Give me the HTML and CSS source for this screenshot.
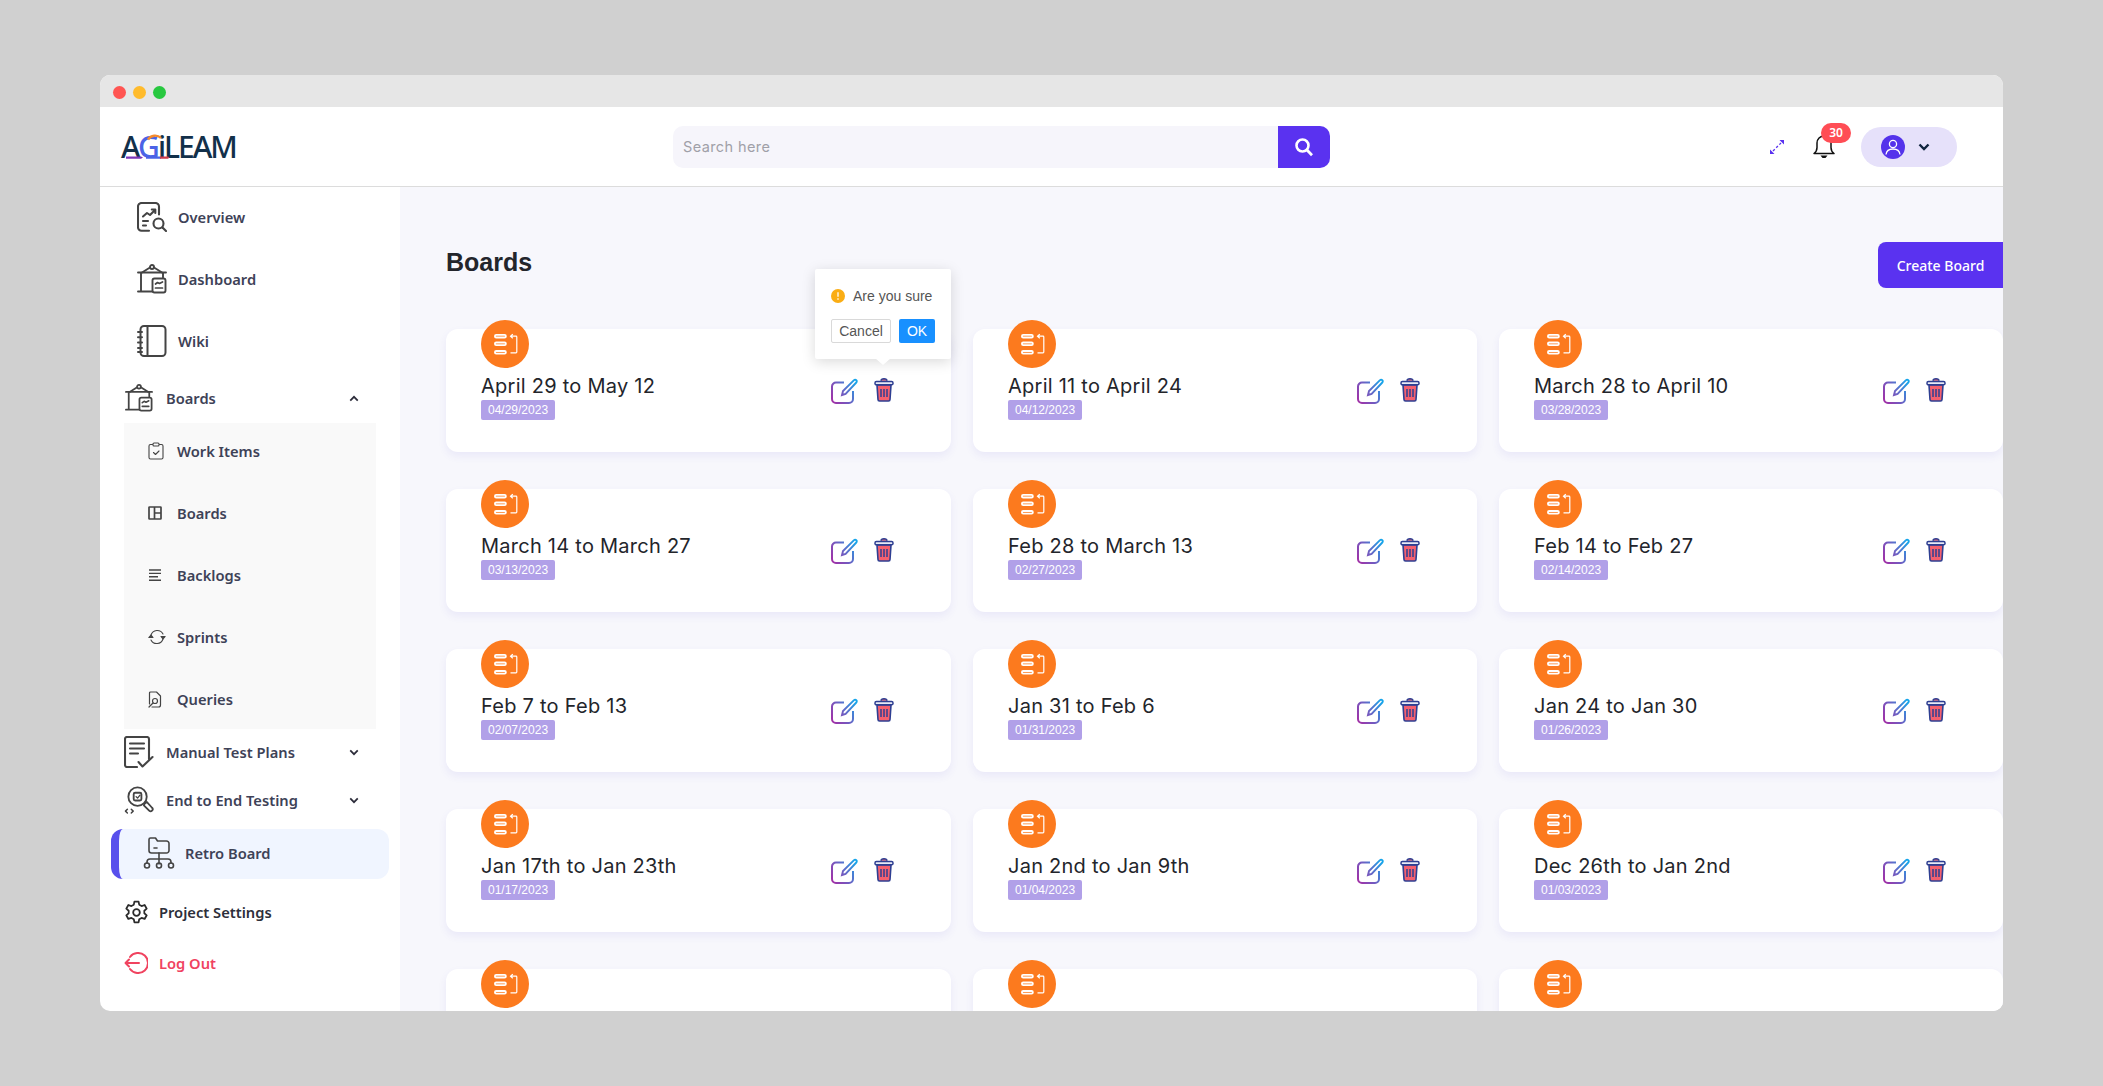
FILE: index.html
```html
<!DOCTYPE html>
<html lang="en">
<head>
  <meta charset="UTF-8" />
  <meta name="viewport" content="width=device-width, initial-scale=1.0"/>
  <title>Agileam Boards</title>
  <link rel="stylesheet" href="styles.css">
</head>
<body>
  <svg class="sprites" width="0" height="0">
    <defs>
      <linearGradient id="edit-grad" gradientUnits="userSpaceOnUse" x1="1" y1="22" x2="27" y2="6">
        <stop offset="0" stop-color="#a22fa6"/>
        <stop offset="0.5" stop-color="#6a62c4"/>
        <stop offset="1" stop-color="#16a5ea"/>
      </linearGradient>
      <symbol id="i-sprint" viewBox="0 0 48 48">
        <circle cx="24" cy="24" r="24" fill="#fc7a1e"/>
        <g fill="none" stroke="#fff" stroke-width="1.800">
          <rect x="13.900" y="14.900" width="11" height="2.600" rx="1.300"/>
          <rect x="13.900" y="22.500" width="11" height="2.600" rx="1.300"/>
          <rect x="13.900" y="31" width="11" height="2.600" rx="1.300"/>
        </g>
        <path d="M30 16.200h5a.8.8 0 0 1 .8.8v15a.8.8 0 0 1-.8.8H29.500M31.800 14.100l-2.300 2.100 2.300 2.100" fill="none" stroke="#fff" stroke-width="1.200"/>
      </symbol>
      <symbol id="i-edit" viewBox="0 0 28 26">
        <path d="M14 4.500H6a4 4 0 0 0-4 4V21a4 4 0 0 0 4 4h13a4 4 0 0 0 4-4v-8" fill="none" stroke="url(#edit-grad)" stroke-width="2"/>
        <path d="M12 17l1-4L24 2.200a1.600 1.600 0 0 1 2.300 0 1.600 1.600 0 0 1 0 2.300L15.600 15.800z" fill="none" stroke="url(#edit-grad)" stroke-width="1.900"/>
      </symbol>
      <symbol id="i-trash" viewBox="0 0 20 24">
        <path d="M3 7h14l-1 14.500a1.500 1.500 0 0 1-1.500 1.500h-9A1.500 1.500 0 0 1 4 21.500z" fill="#f4606f" stroke="#2e3f92" stroke-width="1.600"/>
        <path d="M7 2.800a3 2 0 0 1 6 0" fill="#c8506c" stroke="#2e3f92" stroke-width="1.400"/>
        <rect x="1" y="3.600" width="18" height="3.200" rx="1.400" fill="#e8eaf6" stroke="#2e3f92" stroke-width="1.500"/>
        <path d="M7 11v8M10 11v8M13 11v8" stroke="#2e3f92" stroke-width="1.500"/>
      </symbol>
      <symbol id="i-overview" viewBox="0 0 30 30">
        <g fill="none" stroke="#444" stroke-width="2.100" stroke-linecap="round" stroke-linejoin="round">
          <path d="M12 28.800H4.500a3.500 3.500 0 0 1-3.500-3.500V4.500A3.500 3.500 0 0 1 4.500 1h14A3.500 3.500 0 0 1 22 4.500v8"/>
          <path d="M6 14.500l4-3.500 3 2 5-5M14.800 7.500h3.500V11"/>
          <path d="M6 19h5M6 23.500h3"/>
          <circle cx="21.500" cy="21.500" r="5"/>
          <path d="M25.500 25.500l3.500 3.500"/>
        </g>
      </symbol>
      <symbol id="i-easel" viewBox="0 0 30 30">
        <g fill="none" stroke="#444" stroke-width="1.900" stroke-linecap="round" stroke-linejoin="round">
          <path d="M1 8.500h28M4 8.500v19M1 27.500h14M26 8.500v5"/>
          <path d="M5 8.500l8-5M25 8.500l-8-5"/>
          <circle cx="15" cy="3" r="2"/>
          <rect x="15.500" y="14.500" width="13" height="14" rx="2"/>
          <path d="M18.500 20l2-1.500 2 1 3-1.500M18.500 24h7" stroke-width="1.700"/>
        </g>
      </symbol>
      <symbol id="i-wiki" viewBox="0 0 30 32">
        <g fill="none" stroke="#444" stroke-width="2" stroke-linecap="round" stroke-linejoin="round">
          <rect x="3.500" y="1" width="25" height="30" rx="3.500"/>
          <path d="M10.500 1v30M1 7h4M1 12.300h4M1 17.600h4M1 23h4M1 27h4"/>
        </g>
      </symbol>
      <symbol id="i-clip" viewBox="0 0 16 18">
        <g fill="none" stroke="#444" stroke-width="1.100" stroke-linecap="round" stroke-linejoin="round">
          <path d="M4.500 2.500H2.500a1.500 1.500 0 0 0-1.500 1.500v11.500A1.500 1.500 0 0 0 2.500 17h11a1.500 1.500 0 0 0 1.500-1.500V4a1.500 1.500 0 0 0-1.500-1.500h-2"/>
          <rect x="5" y="1" width="6" height="3" rx="1"/>
          <path d="M5.500 10.500l2 2 3.500-3.500"/>
        </g>
      </symbol>
      <symbol id="i-layout" viewBox="0 0 14 14">
        <path d="M1.500 1h11a.5.5 0 0 1 .5.500v11a.5.5 0 0 1-.5.500h-11a.5.5 0 0 1-.5-.500v-11a.5.5 0 0 1 .5-.500zM6.500 1v12M6.500 7H13" fill="none" stroke="#444" stroke-width="1.700"/>
      </symbol>
      <symbol id="i-lines" viewBox="0 0 14 13">
        <path d="M1 1h12M1 4.400h12M1 7.800h9M1 11.200h12" stroke="#444" stroke-width="1.400"/>
      </symbol>
      <symbol id="i-sync" viewBox="0 0 18 18">
        <g fill="none" stroke="#444" stroke-width="1.100" stroke-linecap="round" stroke-linejoin="round">
          <path d="M3 7a6.500 6.500 0 0 1 12-1M15 11a6.500 6.500 0 0 1-12 1"/>
          <path d="M.8 9.500L3 7l2 2.500z" fill="#444"/>
          <path d="M17.200 8.500L15 11l-2-2.500z" fill="#444"/>
        </g>
      </symbol>
      <symbol id="i-query" viewBox="0 0 14 17">
        <g fill="none" stroke="#444" stroke-width="1.200" stroke-linecap="round" stroke-linejoin="round">
          <path d="M1.500 13V2a1 1 0 0 1 1-1h6l4 4v9a2 2 0 0 1-2 2H4"/>
          <circle cx="7" cy="10" r="2.500"/>
          <path d="M5 12l-4 4"/>
        </g>
      </symbol>
      <symbol id="i-plan" viewBox="0 0 30 32">
        <g fill="none" stroke="#444" stroke-width="2.100" stroke-linecap="round" stroke-linejoin="round">
          <path d="M13 31H3a2 2 0 0 1-2-2V3a2 2 0 0 1 2-2h20a2 2 0 0 1 2 2v20"/>
          <path d="M6 7.500h14M6 12.500h14M6 17.500h8"/>
          <path d="M14.500 26l4 4.500 10-9.500"/>
        </g>
      </symbol>
      <symbol id="i-e2e" viewBox="0 0 30 30">
        <g fill="none" stroke="#444" stroke-width="1.900" stroke-linecap="round" stroke-linejoin="round">
          <circle cx="13.500" cy="11" r="9.500"/>
          <rect x="9.500" y="7" width="8" height="8" rx="1.500"/>
          <path d="M12 11l1.500 1.500 2.500-3" stroke-width="1.400"/>
          <path d="M21 18l2-1.500 5.500 6a2 2 0 0 1-3 3L20 20z"/>
          <path d="M3 24l-2 2 2 2M7 24l2 2-2 2" stroke-width="1.500"/>
        </g>
      </symbol>
      <symbol id="i-retro" viewBox="0 0 32 32">
        <g fill="none" stroke="#444" stroke-width="1.600" stroke-linecap="round" stroke-linejoin="round">
          <path d="M6 2.500A1.500 1.500 0 0 1 7.500 1h5l2 3h9A2.500 2.500 0 0 1 26 6.500v7A2.500 2.500 0 0 1 23.500 16h-15A2.500 2.500 0 0 1 6 13.500z"/>
          <path d="M11 11h3"/>
          <path d="M16 16v11M4 26v-1a3 3 0 0 1 3-3h18a3 3 0 0 1 3 3v1"/>
          <circle cx="4" cy="28.500" r="2.500"/>
          <circle cx="16" cy="28.500" r="2.500"/>
          <circle cx="28" cy="28.500" r="2.500"/>
        </g>
      </symbol>
      <symbol id="i-gear" viewBox="0 0 24 24">
        <g fill="none" stroke="#2b2b2b" stroke-width="1.700" stroke-linecap="round" stroke-linejoin="round">
          <circle cx="12" cy="12" r="3.200"/>
          <path d="M10 1.500h4l.6 3 2.300 1.300 2.900-1 2 3.500-2.300 2v2.400l2.300 2-2 3.500-2.900-1-2.300 1.300-.6 3h-4l-.6-3-2.300-1.300-2.900 1-2-3.500 2.300-2v-2.400l-2.300-2 2-3.500 2.900 1 2.300-1.300z"/>
        </g>
      </symbol>
      <symbol id="i-logout" viewBox="0 0 24 22">
        <g fill="none" stroke="#f0435f" stroke-width="2" stroke-linecap="round" stroke-linejoin="round">
          <path d="M6 5a10 10 0 1 1 0 12"/>
          <path d="M1.500 11H15M5 7.500L1.500 11 5 14.500"/>
        </g>
      </symbol>
      <symbol id="i-down" viewBox="0 0 12 8">
        <path d="M1.500 1.500L6 6l4.500-4.500" fill="none" stroke="#2c2c3a" stroke-width="2.100"/>
      </symbol>
      <symbol id="i-up" viewBox="0 0 12 8">
        <path d="M1.500 6.500L6 2l4.500 4.500" fill="none" stroke="#2c2c3a" stroke-width="2.100"/>
      </symbol>
    </defs>
  </svg>

  <div class="window">
    <div class="titlebar">
      <span class="dot dot-red"></span>
      <span class="dot dot-yellow"></span>
      <span class="dot dot-green"></span>
    </div>

    <header class="topbar">
      <div class="brand">
        <div class="logo">A<span class="logo-g">G</span>iLEAM
          <svg class="logo-marks" width="116" height="26" viewBox="0 0 116 26">
            <path d="M27 5.500a8.500 8.500 0 0 1 13-1.500" fill="none" stroke="#f58a2c" stroke-width="2.400"/>
            <path d="M5 22.500h15l2 1.100-2 1.100H5z" fill="#7a35b8"/>
            <path d="M25 22.500h15v2.200H25z" fill="#4b63e6"/>
            <path d="M39 22.500h8l1.500 1.100-1.500 1.100h-8z" fill="#cf3d4e"/>
          </svg>
        </div>
      </div>
      <div class="search">
        <span class="search-input">Search here</span>
        <button class="search-btn">
          <svg width="20" height="20" viewBox="0 0 20 20"><circle cx="8.500" cy="8.500" r="6" fill="none" stroke="#fff" stroke-width="2.600"/><path d="M13 13l5 5.200" stroke="#fff" stroke-width="2.800"/></svg>
        </button>
      </div>
      <div class="tools">
        <svg class="expand" width="16" height="16" viewBox="0 0 16 16">
          <path d="M4 12L12 4" stroke="#5a32f0" stroke-width="1.300" stroke-dasharray="2.500 2"/>
          <path d="M1 15V10.500L5.500 15zM15 1v4.500L10.500 1z" fill="#5a32f0"/>
        </svg>
        <div class="bell">
          <svg width="22" height="25" viewBox="0 0 22 25">
            <path d="M1 19.500c2-1.500 3-3 3-6V9a7 7 0 0 1 14 0v4.500c0 3 1 4.500 3 6z" fill="none" stroke="#111" stroke-width="1.500" stroke-linejoin="round"/>
            <path d="M7.500 21.500h7l-2 2.500h-3z" fill="#111"/>
          </svg>
          <span class="badge">30</span>
        </div>
        <div class="user">
          <span class="avatar">
            <svg width="16" height="16" viewBox="0 0 16 16"><circle cx="8" cy="5" r="3.600" fill="none" stroke="#fff" stroke-width="1.300"/><path d="M1 15.500c.4-3.500 3-5.500 7-5.500s6.600 2 7 5.500" fill="none" stroke="#fff" stroke-width="1.300"/></svg>
          </span>
          <svg class="user-caret" width="12" height="8" viewBox="0 0 12 8"><path d="M1.500 1.500L6 6l4.500-4.500" fill="none" stroke="#10243e" stroke-width="2.400"/></svg>
        </div>
      </div>
    </header>

    <div class="body">
      <aside class="sidebar">
        <a class="nav-item"><svg class="nav-icon" width="30" height="30"><use href="#i-overview"/></svg>Overview</a>
        <a class="nav-item"><svg class="nav-icon" width="30" height="30"><use href="#i-easel"/></svg>Dashboard</a>
        <a class="nav-item"><svg class="nav-icon" width="30" height="32"><use href="#i-wiki"/></svg>Wiki</a>

        <a class="nav-group nav-group-open"><svg class="group-icon" width="28" height="28"><use href="#i-easel"/></svg>Boards<svg class="caret" width="10" height="7"><use href="#i-up"/></svg></a>
        <div class="subnav">
          <a class="sub-item"><span class="sub-icon"><svg width="16" height="18"><use href="#i-clip"/></svg></span>Work Items</a>
          <a class="sub-item"><span class="sub-icon"><svg width="14" height="14"><use href="#i-layout"/></svg></span>Boards</a>
          <a class="sub-item"><span class="sub-icon"><svg width="14" height="13"><use href="#i-lines"/></svg></span>Backlogs</a>
          <a class="sub-item"><span class="sub-icon"><svg width="18" height="18"><use href="#i-sync"/></svg></span>Sprints</a>
          <a class="sub-item"><span class="sub-icon"><svg width="14" height="17"><use href="#i-query"/></svg></span>Queries</a>
        </div>

        <a class="nav-group"><svg class="group-icon" width="30" height="32"><use href="#i-plan"/></svg>Manual Test Plans<svg class="caret" width="10" height="7"><use href="#i-down"/></svg></a>
        <a class="nav-group"><svg class="group-icon" width="29" height="29"><use href="#i-e2e"/></svg>End to End Testing<svg class="caret" width="10" height="7"><use href="#i-down"/></svg></a>

        <a class="nav-active"><svg class="active-icon" width="32" height="32"><use href="#i-retro"/></svg>Retro Board</a>

        <a class="nav-plain nav-settings"><svg width="25" height="25"><use href="#i-gear"/></svg>Project Settings</a>
        <a class="nav-plain nav-logout"><svg width="24" height="22"><use href="#i-logout"/></svg>Log Out</a>
      </aside>

      <main class="content">
        <div class="content-head">
          <h1>Boards</h1>
          <button class="create-btn">Create Board</button>
        </div>

        <section class="board-grid">
          <article class="card">
            <div class="card-info">
              <svg class="card-icon" width="48" height="48"><use href="#i-sprint"/></svg>
              <h3>April 29 to May 12</h3>
              <span class="date">04/29/2023</span>
            </div>
            <div class="actions">
              <svg width="28" height="26"><use href="#i-edit"/></svg>
              <svg width="20" height="24"><use href="#i-trash"/></svg>
            </div>
            <div class="popconfirm">
              <div class="pop-msg">
                <svg width="14" height="14" viewBox="0 0 14 14"><circle cx="7" cy="7" r="7" fill="#faad14"/><path d="M7 3.200v4.600M7 9.200v1.500" stroke="#fff" stroke-width="1.300"/></svg>
                Are you sure
              </div>
              <div class="pop-btns">
                <button class="btn-cancel">Cancel</button>
                <button class="btn-ok">OK</button>
              </div>
            </div>
          </article>

          <article class="card">
            <div class="card-info">
              <svg class="card-icon" width="48" height="48"><use href="#i-sprint"/></svg>
              <h3>April 11 to April 24</h3>
              <span class="date">04/12/2023</span>
            </div>
            <div class="actions">
              <svg width="28" height="26"><use href="#i-edit"/></svg>
              <svg width="20" height="24"><use href="#i-trash"/></svg>
            </div>
          </article>

          <article class="card">
            <div class="card-info">
              <svg class="card-icon" width="48" height="48"><use href="#i-sprint"/></svg>
              <h3>March 28 to April 10</h3>
              <span class="date">03/28/2023</span>
            </div>
            <div class="actions">
              <svg width="28" height="26"><use href="#i-edit"/></svg>
              <svg width="20" height="24"><use href="#i-trash"/></svg>
            </div>
          </article>

          <article class="card">
            <div class="card-info">
              <svg class="card-icon" width="48" height="48"><use href="#i-sprint"/></svg>
              <h3>March 14 to March 27</h3>
              <span class="date">03/13/2023</span>
            </div>
            <div class="actions">
              <svg width="28" height="26"><use href="#i-edit"/></svg>
              <svg width="20" height="24"><use href="#i-trash"/></svg>
            </div>
          </article>

          <article class="card">
            <div class="card-info">
              <svg class="card-icon" width="48" height="48"><use href="#i-sprint"/></svg>
              <h3>Feb 28 to March 13</h3>
              <span class="date">02/27/2023</span>
            </div>
            <div class="actions">
              <svg width="28" height="26"><use href="#i-edit"/></svg>
              <svg width="20" height="24"><use href="#i-trash"/></svg>
            </div>
          </article>

          <article class="card">
            <div class="card-info">
              <svg class="card-icon" width="48" height="48"><use href="#i-sprint"/></svg>
              <h3>Feb 14 to Feb 27</h3>
              <span class="date">02/14/2023</span>
            </div>
            <div class="actions">
              <svg width="28" height="26"><use href="#i-edit"/></svg>
              <svg width="20" height="24"><use href="#i-trash"/></svg>
            </div>
          </article>

          <article class="card">
            <div class="card-info">
              <svg class="card-icon" width="48" height="48"><use href="#i-sprint"/></svg>
              <h3>Feb 7 to Feb 13</h3>
              <span class="date">02/07/2023</span>
            </div>
            <div class="actions">
              <svg width="28" height="26"><use href="#i-edit"/></svg>
              <svg width="20" height="24"><use href="#i-trash"/></svg>
            </div>
          </article>

          <article class="card">
            <div class="card-info">
              <svg class="card-icon" width="48" height="48"><use href="#i-sprint"/></svg>
              <h3>Jan 31 to Feb 6</h3>
              <span class="date">01/31/2023</span>
            </div>
            <div class="actions">
              <svg width="28" height="26"><use href="#i-edit"/></svg>
              <svg width="20" height="24"><use href="#i-trash"/></svg>
            </div>
          </article>

          <article class="card">
            <div class="card-info">
              <svg class="card-icon" width="48" height="48"><use href="#i-sprint"/></svg>
              <h3>Jan 24 to Jan 30</h3>
              <span class="date">01/26/2023</span>
            </div>
            <div class="actions">
              <svg width="28" height="26"><use href="#i-edit"/></svg>
              <svg width="20" height="24"><use href="#i-trash"/></svg>
            </div>
          </article>

          <article class="card">
            <div class="card-info">
              <svg class="card-icon" width="48" height="48"><use href="#i-sprint"/></svg>
              <h3>Jan 17th to Jan 23th</h3>
              <span class="date">01/17/2023</span>
            </div>
            <div class="actions">
              <svg width="28" height="26"><use href="#i-edit"/></svg>
              <svg width="20" height="24"><use href="#i-trash"/></svg>
            </div>
          </article>

          <article class="card">
            <div class="card-info">
              <svg class="card-icon" width="48" height="48"><use href="#i-sprint"/></svg>
              <h3>Jan 2nd to Jan 9th</h3>
              <span class="date">01/04/2023</span>
            </div>
            <div class="actions">
              <svg width="28" height="26"><use href="#i-edit"/></svg>
              <svg width="20" height="24"><use href="#i-trash"/></svg>
            </div>
          </article>

          <article class="card">
            <div class="card-info">
              <svg class="card-icon" width="48" height="48"><use href="#i-sprint"/></svg>
              <h3>Dec 26th to Jan 2nd</h3>
              <span class="date">01/03/2023</span>
            </div>
            <div class="actions">
              <svg width="28" height="26"><use href="#i-edit"/></svg>
              <svg width="20" height="24"><use href="#i-trash"/></svg>
            </div>
          </article>

          <article class="card">
            <div class="card-info">
              <svg class="card-icon" width="48" height="48"><use href="#i-sprint"/></svg>
            </div>
          </article>

          <article class="card">
            <div class="card-info">
              <svg class="card-icon" width="48" height="48"><use href="#i-sprint"/></svg>
            </div>
          </article>

          <article class="card">
            <div class="card-info">
              <svg class="card-icon" width="48" height="48"><use href="#i-sprint"/></svg>
            </div>
          </article>
        </section>
      </main>
    </div>
  </div>
</body>
</html>
```

FILE: styles.css
```css
html, body {
  margin: 0;
  height: 100%;
  overflow: hidden;
}
body {
  background: #d0d0d0;
  padding: 75px 100px;
  box-sizing: border-box;
  font-family: "Noto Sans", sans-serif;
}
.sprites {
  position: absolute;
}
svg {
  display: block;
  flex: none;
}
button {
  border: none;
  cursor: pointer;
}

.window {
  height: 936px;
  border-radius: 10px;
  overflow: hidden;
  background: #fff;
  display: flex;
  flex-direction: column;
}
.titlebar {
  height: 32px;
  flex: none;
  background: #e6e6e6;
  display: flex;
  align-items: center;
  gap: 7px;
  padding: 2px 0 0 13px;
  box-sizing: border-box;
}
.dot {
  width: 13px;
  height: 13px;
  border-radius: 50%;
}
.dot-red { background: #ff5552; }
.dot-yellow { background: #ffbb2c; }
.dot-green { background: #28c840; }

/* top bar */
.topbar {
  height: 80px;
  flex: none;
  box-sizing: border-box;
  border-bottom: 1px solid #dcdcdc;
  display: flex;
  align-items: center;
  padding: 0 46px 0 21px;
}
.brand {
  width: 552px;
  flex: none;
}
.logo {
  position: relative;
  width: 116px;
  height: 26px;
  font-size: 30px;
  font-weight: 500;
  line-height: 26px;
  letter-spacing: -2px;
  color: #12304a;
  white-space: nowrap;
}
.logo-g {
  color: #4b63e6;
}
.logo-marks {
  position: absolute;
  top: 0;
  left: 0;
}
.search {
  width: 657px;
  height: 42px;
  display: flex;
  background: #f6f5fb;
  border-radius: 10px;
  overflow: hidden;
}
.search-input {
  flex: 1;
  align-self: center;
  padding-left: 10px;
  font-family: Inter, sans-serif;
  font-size: 14.500px;
  letter-spacing: 0.4px;
  color: #a0a0a8;
}
.search-btn {
  width: 52px;
  background: #5a32f0;
  display: flex;
  align-items: center;
  justify-content: center;
}
.tools {
  margin-left: auto;
  display: flex;
  align-items: center;
}
.expand {
  margin-right: 28px;
}
.bell {
  position: relative;
  margin-right: 26px;
}
.badge {
  position: absolute;
  top: -11px;
  left: 8px;
  width: 30px;
  height: 20px;
  border-radius: 10px;
  background: #ff4d55;
  color: #fff;
  font-family: "Noto Sans", sans-serif;
  font-size: 12px;
  font-weight: 600;
  line-height: 20px;
  text-align: center;
}
.user {
  width: 96px;
  height: 40px;
  box-sizing: border-box;
  border-radius: 20px;
  background: #e6e1fa;
  display: flex;
  align-items: center;
  padding-left: 20px;
  gap: 13px;
}
.avatar {
  width: 24px;
  height: 24px;
  border-radius: 50%;
  background: #5433eb;
  display: flex;
  align-items: center;
  justify-content: center;
}

/* sidebar */
.body {
  flex: 1;
  min-height: 0;
  display: flex;
}
.sidebar {
  width: 300px;
  flex: none;
  box-sizing: border-box;
  font-size: 14.700px;
  font-weight: 600;
  color: #3e4257;
}
.sidebar a {
  display: flex;
  align-items: center;
  box-sizing: border-box;
  padding-bottom: 2px;
}
.nav-item {
  height: 62px;
  padding-left: 37px;
  gap: 11px;
}
.nav-group {
  padding: 0 41px 0 24px;
  height: 48px;
  position: relative;
}
.sidebar .nav-group-open {
  height: 50px;
  padding-bottom: 0;
}
.group-icon {
  width: 30px;
  margin-right: 12px;
}
.caret {
  margin-left: auto;
}
.subnav {
  margin: 0 24px;
  height: 306px;
  background: #f9f9f9;
  display: flex;
  flex-direction: column;
  gap: 4px;
}
.sub-item {
  height: 58px;
  padding-left: 24px;
}
.sub-icon {
  width: 29px;
  display: flex;
}
.nav-active {
  margin: 4px 11px 0;
  height: 50px;
  background: #f0f5ff;
  border-left: 8px solid #5850ec;
  border-radius: 12px;
  padding-left: 24px;
  gap: 10px;
}
.nav-plain {
  padding-left: 24px;
  gap: 10px;
}
.nav-settings {
  height: 68px;
  color: #2d2f3a;
}
.nav-logout {
  height: 34px;
  gap: 11px;
  color: #f0435f;
}

/* content */
.content {
  flex: 1;
  min-width: 0;
  overflow: hidden;
  background: #f7f7fc;
  padding: 55px 0 0 46px;
}
.content-head {
  display: flex;
  justify-content: space-between;
  align-items: flex-start;
}
.content-head h1 {
  margin: 0;
  font-family: "Liberation Sans", sans-serif;
  font-size: 25px;
  font-weight: 700;
  line-height: 40px;
  color: #23252b;
}
.create-btn {
  width: 125px;
  height: 46px;
  border-radius: 8px 0 0 8px;
  background: #5a32f0;
  color: #fff;
  font-family: "Noto Sans", sans-serif;
  font-size: 14px;
  font-weight: 500;
}
.board-grid {
  margin-top: 41px;
  display: grid;
  grid-template-columns: 505px 504px 1fr;
  grid-auto-rows: 123px;
  gap: 37px 22px;
}
.card {
  position: relative;
  background: #fff;
  border-radius: 12px;
  box-shadow: 0 4px 8px rgba(80, 60, 200, 0.08);
  display: flex;
  justify-content: space-between;
  padding: 0 57px 0 35px;
}
.card-icon {
  margin-top: -9px;
}
.card h3 {
  margin: 4px 0 0;
  font-family: Inter, sans-serif;
  font-size: 20px;
  font-weight: 400;
  line-height: 28px;
  letter-spacing: 0.25px;
  color: #23252b;
}
.date {
  display: inline-block;
  height: 20px;
  padding: 0 7px;
  border-radius: 2px;
  background: #b1a0e8;
  color: #fff;
  font-family: "Liberation Sans", sans-serif;
  font-size: 12px;
  line-height: 20px;
  vertical-align: top;
}
.actions {
  display: flex;
  gap: 16px;
  padding-top: 49px;
  align-items: flex-start;
}

/* popconfirm */
.popconfirm {
  position: absolute;
  top: -60px;
  right: 0;
  width: 136px;
  height: 90px;
  box-sizing: border-box;
  padding: 20px 16px 0;
  background: #fff;
  border-radius: 2px;
  box-shadow: 0 3px 14px rgba(0, 0, 0, 0.15);
  font-family: "Liberation Sans", sans-serif;
  font-size: 14px;
  color: #555;
  z-index: 2;
}
.popconfirm::after {
  content: '';
  position: absolute;
  left: 60px;
  bottom: -6px;
  border-left: 8px solid transparent;
  border-right: 8px solid transparent;
  border-top: 7px solid #fff;
}
.pop-msg {
  display: flex;
  align-items: center;
  gap: 8px;
  white-space: nowrap;
  height: 14px;
}
.pop-btns {
  display: flex;
  gap: 8px;
  margin-top: 16px;
}
.btn-cancel, .btn-ok {
  height: 24px;
  padding: 0;
  font-family: "Liberation Sans", sans-serif;
  font-size: 14px;
  border-radius: 2px;
}
.btn-cancel {
  width: 60px;
  background: #fff;
  border: 1px solid #d9d9d9;
  color: #555;
}
.btn-ok {
  width: 36px;
  background: #1890ff;
  color: #fff;
}
```
